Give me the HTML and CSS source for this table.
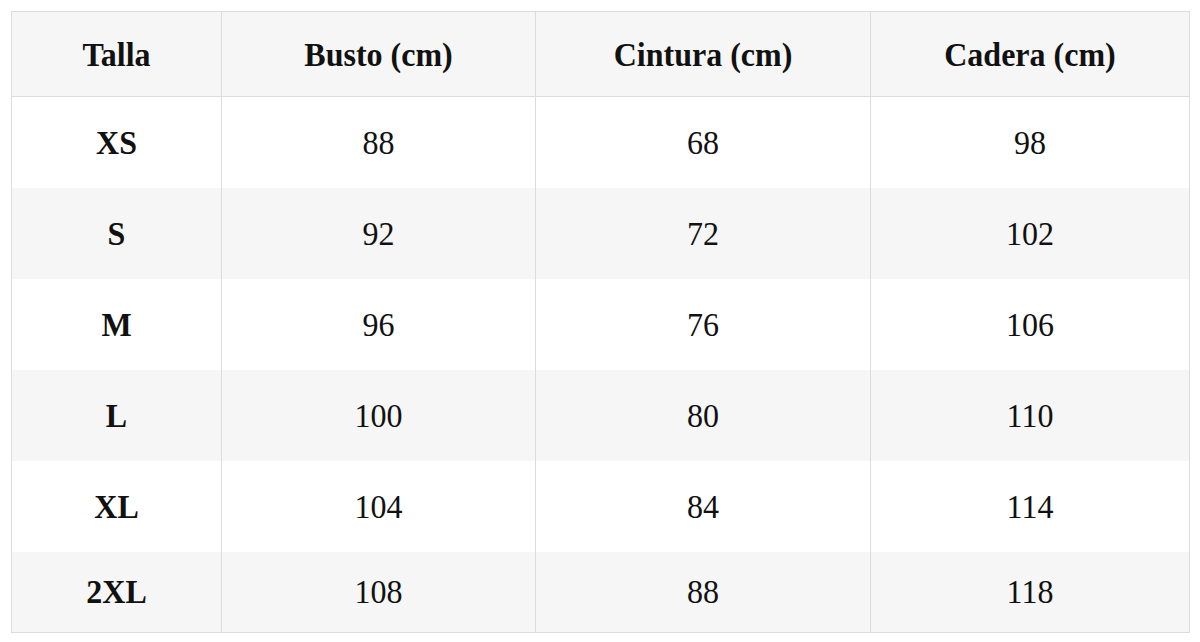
FILE: index.html
```html
<!DOCTYPE html>
<html lang="es">
<head>
<meta charset="utf-8">
<title>Tabla de tallas</title>
<link rel="stylesheet" href="styles.css">
</head>
<body>
<table class="sizes">
  <colgroup>
    <col class="c1"><col class="c2"><col class="c3"><col class="c4">
  </colgroup>
  <thead>
    <tr><th><span>Talla</span></th><th><span>Busto (cm)</span></th><th><span>Cintura (cm)</span></th><th><span>Cadera (cm)</span></th></tr>
  </thead>
  <tbody>
    <tr><th><span>XS</span></th><td><span>88</span></td><td><span>68</span></td><td><span>98</span></td></tr>
    <tr><th><span>S</span></th><td><span>92</span></td><td><span>72</span></td><td><span>102</span></td></tr>
    <tr><th><span>M</span></th><td><span>96</span></td><td><span>76</span></td><td><span>106</span></td></tr>
    <tr><th><span>L</span></th><td><span>100</span></td><td><span>80</span></td><td><span>110</span></td></tr>
    <tr><th><span>XL</span></th><td><span>104</span></td><td><span>84</span></td><td><span>114</span></td></tr>
    <tr class="last"><th><span>2XL</span></th><td><span>108</span></td><td><span>88</span></td><td><span>118</span></td></tr>
  </tbody>
</table>
</body>
</html>
```
FILE: styles.css
```css
html, body {
  margin: 0;
  padding: 0;
  background: #ffffff;
}
body {
  padding: 11px;
  font-family: "Liberation Serif", "Times New Roman", serif;
  color: #111111;
}
.sizes {
  border-collapse: collapse;
  width: 1178px;
  table-layout: fixed;
  border: 1px solid #dcdcdc;
}
.c1 { width: 210px; }
.c2 { width: 314px; }
.c3 { width: 335px; }
.c4 { width: 319px; }
.sizes th, .sizes td {
  text-align: center;
  vertical-align: middle;
  font-size: 32px;
  padding: 0;
  border-left: 1px solid #dcdcdc;
  border-right: 1px solid #dcdcdc;
}
.sizes th { font-weight: bold; }
.sizes td { font-weight: normal; }
.sizes span {
  display: inline-block;
  transform: scaleY(1.07);
}
.sizes thead tr {
  height: 85px;
  background: #f6f6f6;
}
.sizes thead th { border-bottom: 1px solid #dcdcdc; }
.sizes tbody tr { height: 91px; background: #ffffff; }
.sizes tbody tr:nth-child(even) { background: #f6f6f6; }
.sizes tbody tr.last { height: 81px; }
```
